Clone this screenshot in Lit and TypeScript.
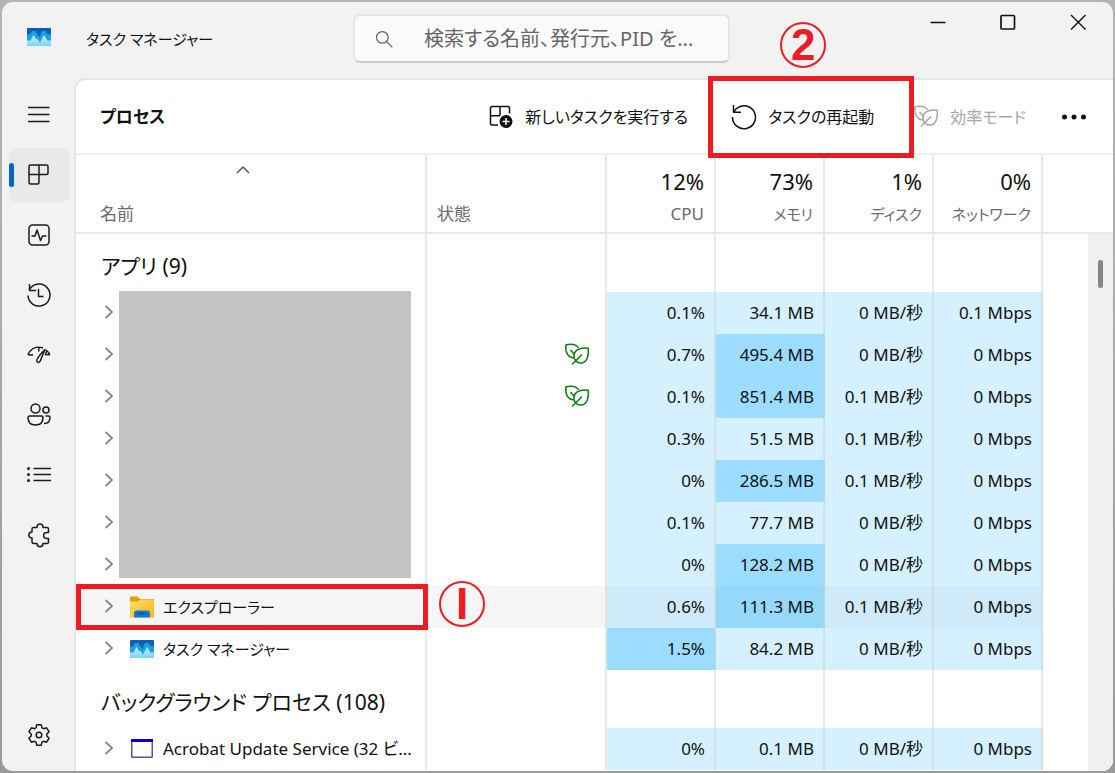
import { LitElement, html, svg, css, nothing } from "lit";
import { customElement, property } from "lit/decorators.js";
import { classMap } from "lit/directives/class-map.js";

type Heat = "low" | "mid";
interface Cell { text: string; heat: Heat; }
interface Row {
  kind: "group" | "process";
  name: string;
  icon?: string;
  kana?: boolean;
  eco?: boolean;
  active?: boolean;
  cells: Cell[];
}

const cell = (text: string, heat: Heat = "low"): Cell => ({ text, heat });
const group = (name: string): Row => ({ kind: "group", name, cells: [] });
const proc = (name: string, cells: Cell[], extra: Partial<Row> = {}): Row =>
  ({ kind: "process", name, cells, ...extra });

const ROWS: Row[] = [
  group("アプリ (9)"),
  proc("", [cell("0.1%"), cell("34.1 MB"), cell("0 MB/秒"), cell("0.1 Mbps")]),
  proc("", [cell("0.7%"), cell("495.4 MB", "mid"), cell("0 MB/秒"), cell("0 Mbps")], { eco: true }),
  proc("", [cell("0.1%"), cell("851.4 MB", "mid"), cell("0.1 MB/秒"), cell("0 Mbps")], { eco: true }),
  proc("", [cell("0.3%"), cell("51.5 MB"), cell("0.1 MB/秒"), cell("0 Mbps")]),
  proc("", [cell("0%"), cell("286.5 MB", "mid"), cell("0.1 MB/秒"), cell("0 Mbps")]),
  proc("", [cell("0.1%"), cell("77.7 MB"), cell("0 MB/秒"), cell("0 Mbps")]),
  proc("", [cell("0%"), cell("128.2 MB", "mid"), cell("0 MB/秒"), cell("0 Mbps")]),
  proc("エクスプローラー", [cell("0.6%"), cell("111.3 MB", "mid"), cell("0.1 MB/秒"), cell("0 Mbps")], { icon: "folder", kana: true, active: true }),
  proc("タスク マネージャー", [cell("1.5%", "mid"), cell("84.2 MB"), cell("0 MB/秒"), cell("0 Mbps")], { icon: "app", kana: true }),
  group("バックグラウンド プロセス (108)"),
  proc("Acrobat Update Service (32 ビ...", [cell("0%"), cell("0.1 MB"), cell("0 MB/秒"), cell("0 Mbps")], { icon: "window" }),
];

const METERS = [
  { value: "12%", label: "CPU", kana: false },
  { value: "73%", label: "メモリ", kana: true },
  { value: "1%", label: "ディスク", kana: true },
  { value: "0%", label: "ネットワーク", kana: true },
];

const NAV = [
  { icon: "processes", label: "プロセス", current: true },
  { icon: "performance", label: "パフォーマンス" },
  { icon: "history", label: "アプリの履歴" },
  { icon: "startup", label: "スタートアップ アプリ" },
  { icon: "users", label: "ユーザー" },
  { icon: "details", label: "詳細" },
  { icon: "services", label: "サービス" },
];

const ICONS: Record<string, unknown> = {
  menu: svg`<path d="M1 4.500h21.500M1 11.500h21.500M1 18.500h21.500"/>`,
  processes: svg`<path d="M3.500 2h16A1.500 1.500 0 0 1 21 3.500V10a1.500 1.500 0 0 1-1.500 1.500H12v8a1.500 1.500 0 0 1-1.500 1.500h-7A1.500 1.500 0 0 1 2 19.500v-16A1.500 1.500 0 0 1 3.500 2zM12 2v9.500M2 11.500h10"/>`,
  performance: svg`<rect x="2" y="2" width="20" height="20" rx="3.500"/><path d="M4.500 13h3.500l2-6 3.500 10.500 2-4.500h4"/>`,
  history: svg`<path d="M1 12.500A11 11 0 1 0 4 4.500L2 7M2.500 1v6.500H9M11.500 6v7.500h5"/>`,
  startup: svg`<path d="M1 11.500c3.500-7 9.500-8.500 15-6.500M19 7c1.500 1.200 2.700 2.700 3.800 4.500M.7 10.500L2 12l4-.2M11.800 4v4.500M19.500 8.500l-1 3 4.500.2M18 6.500c-3 3-7.500 7.500-8.200 10.800-.3 2.400 2.600 2.900 3.400.8C14.700 14.500 16.500 10 18 6.500z"/>`,
  users: svg`<circle cx="8.500" cy="5.500" r="4.500"/><circle cx="19" cy="7" r="3"/><path d="M2.500 13h12a1.500 1.500 0 0 1 1.500 1.500c0 5-3 7.500-7.500 7.500S1 19.500 1 14.500a1.500 1.500 0 0 1 1.500-1.500zM18.500 13h3a1.500 1.500 0 0 1 1.500 1.500c0 4-2.500 6-6 6"/>`,
  details: svg`<path d="M6.500 5.500H24M6.500 11.500H24M6.500 17.500H24"/><g class="solid"><circle cx="1.500" cy="5.500" r="1.500"/><circle cx="1.500" cy="11.500" r="1.500"/><circle cx="1.500" cy="17.500" r="1.500"/></g>`,
  services: svg`<path d="M5 6a1.500 1.500 0 0 1 1.500-1.500H10C9.500-.2 16.500-.2 16 4.500h4A1.500 1.500 0 0 1 21.500 6v3.500h-1.500c-4.500 0-4.500 6 0 6h1.500V19a1.500 1.500 0 0 1-1.500 1.500h-4c0 4.200-6 4.200-6 0H6.500A1.500 1.500 0 0 1 5 19v-4c-4.200 0-4.200-6 0-6z"/>`,
  settings: svg`<circle cx="12" cy="12" r="2.800"/><path d="M9.700 1.800h4.600l.7 3 1.600.9 3-.9 2.500 4-2.300 2.200v2l2.300 2.200-2.500 4-3-.9-1.600.9-.7 3H9.700l-.7-3-1.600-.9-3 .9-2.500-4L4.200 13v-2L1.900 8.800l2.500-4 3 .9L9 4.800z"/>`,
  search: svg`<circle cx="10" cy="10" r="7"/><path d="M15 15l7 7"/>`,
  newTask: svg`<path d="M9 20H3a1.500 1.500 0 0 1-1.500-1.500V3A1.500 1.500 0 0 1 3 1.500h16A1.500 1.500 0 0 1 20.500 3v5.500M11 1.500v9.200M1.500 10.700H11"/><circle class="solid" cx="17" cy="16.500" r="6.500"/><path class="plus" d="M17 13v7M13.500 16.500h7"/>`,
  restart: svg`<path d="M.5 12A11.500 11.500 0 1 0 4.500 3.500L1.500 7M1.500 0V7.200H9"/>`,
  eco: svg`<path d="M13.500 5C11.500 1.500 6.500.8 1 1.800 0 9 2.500 14.500 9 15M5.500 7l3.500 4M23.300 5.200C13.500 4 8.500 8 9 14c.4 4 4 6.500 8 6 5-1 7-7.500 6.300-14.800zM17 11.500L7 21.500"/>`,
  more: svg`<g class="solid"><circle cx="2.500" cy="12" r="2.500"/><circle cx="12" cy="12" r="2.500"/><circle cx="21.500" cy="12" r="2.500"/></g>`,
  minimize: svg`<path class="thick" d="M4.500 12.500h15"/>`,
  maximize: svg`<rect class="heavy" x="5" y="5.500" width="13.500" height="13.500" rx="1"/>`,
  close: svg`<path class="thick" d="M5 5l14.500 14.500M19.500 5L5 19.500"/>`,
  expand: svg`<path class="arrow" d="M8.500 5l6.500 6-6.500 6"/>`,
  sort: svg`<path d="M6 15l6-6 6 6"/>`,
  app: svg`<defs><linearGradient id="sky" x1="0" y1="0" x2="0" y2="1"><stop offset="0" stop-color="#0a5db0"/><stop offset="1" stop-color="#0f7ad0"/></linearGradient><linearGradient id="ice" x1="0" y1="0" x2="0" y2="1"><stop offset="0" stop-color="#cdeefd"/><stop offset="1" stop-color="#7bd3fb"/></linearGradient></defs>
    <rect class="flat" x="0" y="3" width="24" height="18" rx="1" fill="url(#sky)"/>
    <path class="flat" fill="#1f9fe8" d="M0 9.500h3L5 6h3l4.500 6.500L15 6h3l3 3.500h3V18H0z"/>
    <path class="flat" fill="url(#ice)" d="M0 15.500h3.500L6.500 10l2.500 4h1.500l2.500 3.500L17 10l3.500 5.500H24V20a1 1 0 0 1-1 1H1a1 1 0 0 1-1-1z"/>`,
  folder: svg`<defs><linearGradient id="gold" x1="0" y1="0" x2="1" y2="1"><stop offset="0" stop-color="#ffdd6b"/><stop offset="1" stop-color="#f8b516"/></linearGradient></defs>
    <path class="flat" fill="#dfa006" d="M0 2.500a1 1 0 0 1 1-1h6.500L10 4h13a1 1 0 0 1 1 1v4H0z"/>
    <path class="flat" fill="url(#gold)" d="M0 6.500h8L10.500 4.500H24V22.500H0z"/>
    <path class="flat" fill="#1478cf" d="M4 22.500v-4a3 3 0 0 1 3-3h10a3 3 0 0 1 3 3v4z"/>
    <path d="M7.500 18.500h9" stroke="#0b4f96"/>`,
  window: svg`<rect class="flat" x="1" y="2" width="22" height="19" rx="1" fill="#5a52a0"/><rect class="flat" x="1" y="2" width="22" height="3" fill="#0000e0"/><rect class="flat" x="2.500" y="5" width="19" height="14.500" fill="#fff"/>`,
};

@customElement("tm-icon")
class TmIcon extends LitElement {
  @property() name = "";
  static styles = css`
    :host { display: inline-flex; flex: none; width: 24px; height: 24px; }
    svg { width: 100%; height: 100%; overflow: visible; fill: none; stroke: currentColor; stroke-width: 1.5; stroke-linejoin: round; }
    .solid { fill: currentColor; stroke: none; }
    .flat { stroke: none; }
    .plus { stroke: #fff; }
    .thick { stroke-width: 1.4; }
    .heavy { stroke-width: 1.7; }
    .arrow { stroke-width: 1.9; }
  `;
  render() {
    return html`<svg viewBox="0 0 24 24" aria-hidden="true">${ICONS[this.name]}</svg>`;
  }
}

@customElement("app-root")
class AppRoot extends LitElement {
  static styles = css`
    * { box-sizing: border-box; }
    :host {
      display: block; box-sizing: border-box; height: 100vh; padding: 2px; overflow: hidden;
      background: linear-gradient(#b4b4b4, #999b99);
      color: #111; font-family: "Noto Sans", "Noto Sans CJK JP", sans-serif;
      font-size: 17px; line-height: 24px; font-feature-settings: "palt";
    }
    button { font: inherit; font-feature-settings: inherit; color: inherit; background: none; border: 0; padding: 0; }
    .window { display: flex; flex-direction: column; height: 100%; overflow: hidden; border-radius: 11px; background: #f2f2f2; }

    .titlebar { display: grid; grid-template-columns: minmax(0, 11fr) 377px minmax(0, 12fr); flex: none; height: 76px; }
    .brand { display: flex; align-items: center; gap: 35px; padding: 0 0 2px 25px; }
    .brand h1 { margin: 0; font-size: 15px; font-weight: 400; white-space: nowrap; }
    .brand tm-icon { margin-bottom: 4px; }
    .search { display: flex; align-items: center; align-self: start; gap: 30px; height: 49px; margin-top: 12px; padding: 0 12px 0 19px;
      border: 2px solid #e6e6e6; border-bottom-color: #cbcbcb; border-radius: 7px; background: #fafafa; color: #666; }
    .search tm-icon { width: 20px; height: 20px; }
    .search input { flex: 1; min-width: 0; padding: 0; border: 0; outline: 0; background: none; font: inherit; font-size: 20px; font-feature-settings: inherit; }
    .search input::placeholder { color: #666; opacity: 1; }
    .controls { display: flex; justify-content: flex-end; }
    .controls button { display: grid; place-items: center; width: 70px; height: 40px; }

    .body { display: flex; flex: 1; min-height: 0; }
    .rail { display: flex; flex-direction: column; gap: 6px; flex: none; width: 72px; padding: 10px 5px 9px 7px; }
    .rail button { position: relative; display: grid; place-items: center; height: 54px; border-radius: 7px; color: #1b1b1b; }
    .rail .current { background: #e9e9e9; }
    .rail .current::before { content: ""; position: absolute; left: 0; top: 15px; width: 5px; height: 24px; border-radius: 3px; background: #0067c0; }
    .rail .last { margin-top: auto; }

    .panel { display: flex; flex-direction: column; flex: 1; min-width: 0; border: solid #e5e5e5; border-width: 2px 0 0 2px; border-top-left-radius: 12px; background: #fff; }
    .toolbar { display: flex; align-items: center; flex: none; height: 75px; padding: 0 9px 0 24px; border-bottom: 2px solid #efefef; }
    .toolbar h2 { flex: 1; margin: 0; font-size: 17px; font-weight: 700; }
    .toolbar button { position: relative; display: flex; align-items: center; gap: 12px; height: 40px; padding: 0 18px; font-size: 16px; white-space: nowrap; }
    .toolbar .run { margin-right: 8px; }
    .toolbar .restart { margin-right: 4px; }
    .toolbar button:disabled { color: #a6a6a6; }

    .marked::after { content: ""; position: absolute; z-index: 1; border: 5px solid #ed1c24; pointer-events: none; }
    .toolbar .marked::after { inset: -21px -22px -21px -6px; }
    .name.marked::after { inset: -2px -3px -2px 0; }
    .step { position: absolute; z-index: 2; display: grid; place-items: center; width: 46px; height: 46px; border: 2px solid #ed1c24; border-radius: 50%;
      color: #ed1c24; font-family: "Liberation Sans", sans-serif; font-weight: 700; font-size: 44px; line-height: 42px; }
    .toolbar .step { left: 66px; bottom: 69px; }
    .status .step { left: 12px; top: -5px; }

    .list { position: relative; flex: 1; min-height: 0; overflow: hidden; }
    table { width: 100%; table-layout: fixed; border-collapse: separate; border-spacing: 0; }
    .col-status { width: 180px; }
    .col-meter { width: 109px; }
    .col-end { width: 70px; }
    th, td { padding: 0; font-weight: 400; border-right: 2px solid rgba(207, 207, 207, 0.48); text-align: right; white-space: nowrap; }
    th:last-child, td:last-child { border-right: 0; }
    thead th { position: relative; height: 79px; padding: 0 10px 6px; vertical-align: bottom; border-bottom: 2px solid #e8e8e8; color: #6a6a6a; }
    thead .left { text-align: left; }
    thead .first { padding-left: 24px; }
    .sort { display: flex; justify-content: center; padding: 0 30px 20px 0; color: #555; }
    .meter { display: block; margin-bottom: 5px; font-size: 22px; line-height: 32px; color: #111; }
    .kana { font-size: 15px; }
    tbody td, tbody th { height: 42px; }
    .group th, .group td { height: 58px; }
    .group th { padding: 6px 0 0 25px; font-size: 21px; text-align: left; }
    .name { position: relative; padding-left: 26px; text-align: left; }
    .entry { display: flex; align-items: center; }
    .entry button { display: flex; justify-content: center; width: 14px; height: 24px; margin-right: 14px; color: #8a8a8a; }
    .entry span { overflow: hidden; text-overflow: ellipsis; margin: 0 4px 0 9px; }
    .status { position: relative; padding-right: 16px; color: #107c10; }
    .status tm-icon { display: flex; margin-left: auto; }
    .value { padding-right: 9px; }
    .low { background: #d5f1ff; }
    .mid { background: #9bdcff; }
    .active .name, .active .status { background: #f5f5f5; }
    .active .low { background: #cfeaf8; }
    .active .mid { background: #96d8fa; }
    .redaction { position: absolute; left: 43px; top: 136px; width: 292px; height: 287px; background: #c3c3c3; }
    .scroll { position: absolute; right: 0; top: 79px; bottom: 0; width: 25px; padding: 26px 10px; background: #f0f0f0; }
    .thumb { height: 28px; width: 5px; border-radius: 3px; background: #858585; }
  `;

  private row(r: Row) {
    if (r.kind === "group") {
      return html`<tr class="group"><th scope="rowgroup">${r.name}</th><td></td><td></td><td></td><td></td><td></td><td></td></tr>`;
    }
    return html`<tr class=${classMap({ active: !!r.active })}>
      <td class=${classMap({ name: true, marked: !!r.active })}>
        <div class="entry">
          <button aria-label="展開"><tm-icon name="expand"></tm-icon></button>
          ${r.icon ? html`<tm-icon name=${r.icon}></tm-icon><span class=${classMap({ kana: !!r.kana })}>${r.name}</span>` : nothing}
        </div>
      </td>
      <td class="status">
        ${r.eco ? html`<tm-icon name="eco"></tm-icon>` : nothing}
        ${r.active ? html`<div class="step" aria-label="1">I</div>` : nothing}
      </td>
      ${r.cells.map((c) => html`<td class="value ${c.heat}">${c.text}</td>`)}
      <td></td>
    </tr>`;
  }

  render() {
    return html`<div class="window">
      <header class="titlebar">
        <div class="brand"><tm-icon name="app"></tm-icon><h1>タスク マネージャー</h1></div>
        <label class="search"><tm-icon name="search"></tm-icon>
          <input type="search" aria-label="検索" placeholder="検索する名前、発行元、PID を..." /></label>
        <div class="controls">
          <button aria-label="最小化"><tm-icon name="minimize"></tm-icon></button>
          <button aria-label="最大化"><tm-icon name="maximize"></tm-icon></button>
          <button aria-label="閉じる"><tm-icon name="close"></tm-icon></button>
        </div>
      </header>
      <div class="body">
        <nav class="rail">
          <button aria-label="ナビゲーション"><tm-icon name="menu"></tm-icon></button>
          ${NAV.map((n) => html`<button class=${classMap({ current: !!n.current })} aria-label=${n.label}><tm-icon name=${n.icon}></tm-icon></button>`)}
          <button class="last" aria-label="設定"><tm-icon name="settings"></tm-icon></button>
        </nav>
        <main class="panel">
          <div class="toolbar">
            <h2>プロセス</h2>
            <button class="run"><tm-icon name="newTask"></tm-icon>新しいタスクを実行する</button>
            <button class="restart marked"><tm-icon name="restart"></tm-icon>タスクの再起動<span class="step">2</span></button>
            <button disabled><tm-icon name="eco"></tm-icon>効率モード</button>
            <button aria-label="その他"><tm-icon name="more"></tm-icon></button>
          </div>
          <div class="list">
            <table>
              <colgroup><col /><col class="col-status" />${METERS.map(() => html`<col class="col-meter" />`)}<col class="col-end" /></colgroup>
              <thead><tr>
                <th class="left first" scope="col"><div class="sort"><tm-icon name="sort"></tm-icon></div>名前</th>
                <th class="left" scope="col">状態</th>
                ${METERS.map((m) => html`<th scope="col"><span class="meter">${m.value}</span><span class=${classMap({ kana: m.kana })}>${m.label}</span></th>`)}
                <th></th>
              </tr></thead>
              <tbody>${ROWS.map((r) => this.row(r))}</tbody>
            </table>
            <div class="redaction"></div>
            <div class="scroll"><div class="thumb"></div></div>
          </div>
        </main>
      </div>
    </div>`;
  }
}
